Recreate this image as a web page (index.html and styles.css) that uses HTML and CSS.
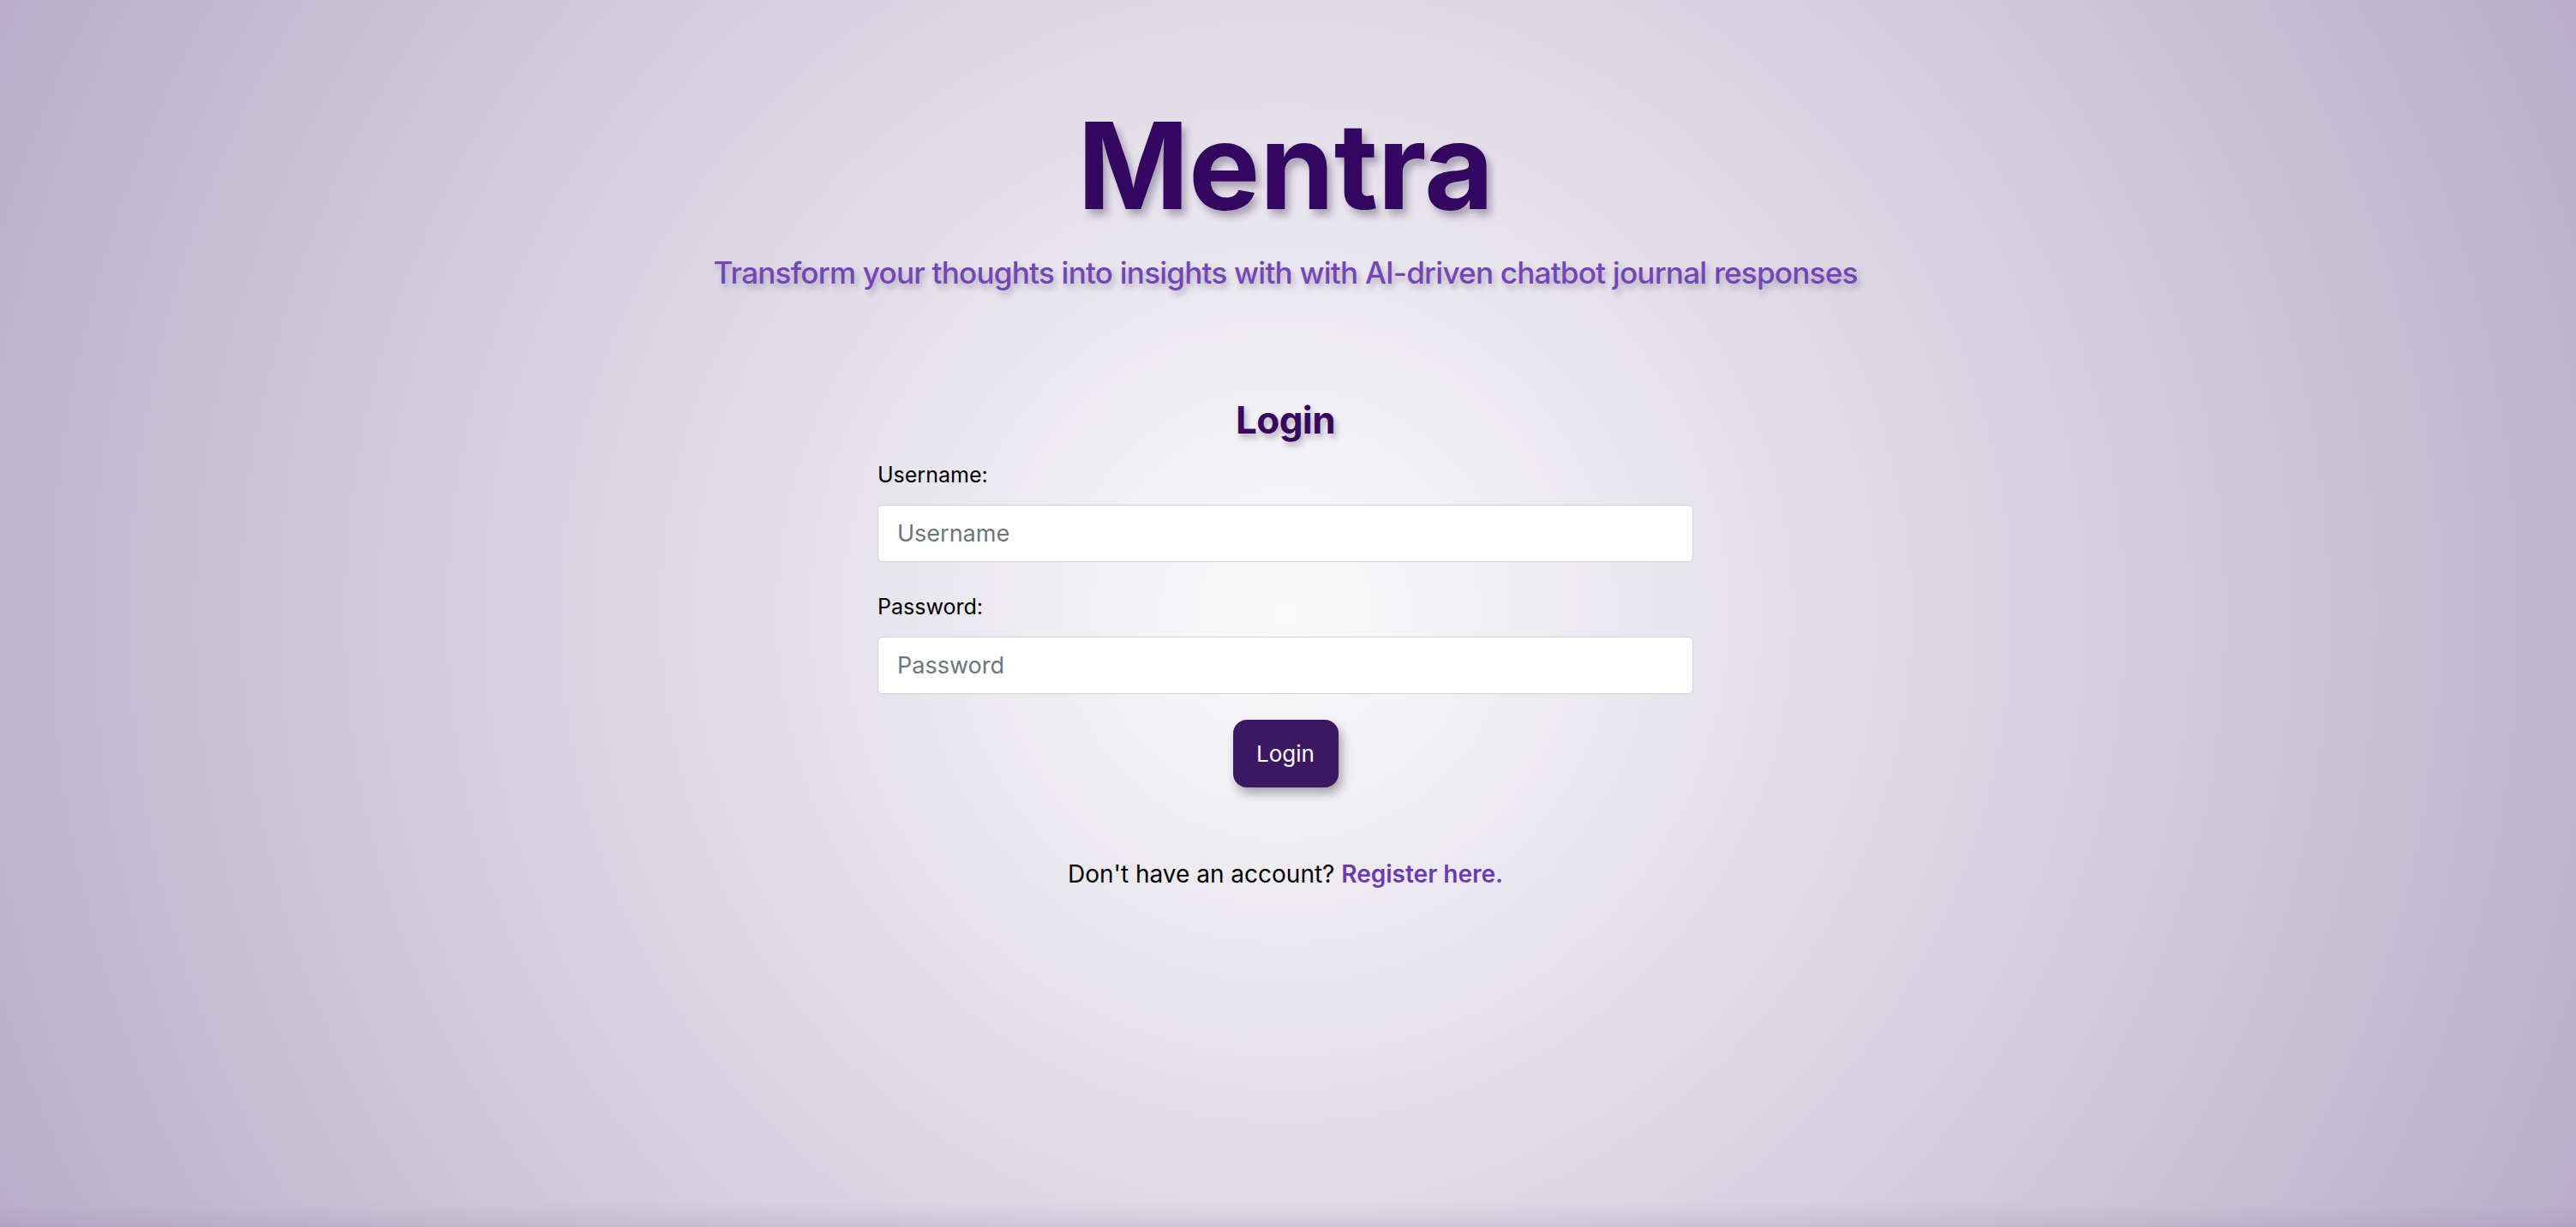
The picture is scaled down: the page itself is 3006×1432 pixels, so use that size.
FILE: index.html
```html
<!DOCTYPE html>
<html lang="en">
<head>
<meta charset="utf-8">
<title>Mentra - Login</title>
<link rel="stylesheet" href="styles.css">
</head>
<body>
<main class="page">
  <header class="hero">
    <h1 class="brand">Mentra</h1>
    <p class="tagline">Transform your thoughts into insights with with AI-driven chatbot journal responses</p>
  </header>
  <section class="login">
    <h2 class="login-title">Login</h2>
    <form class="login-form">
      <label class="field-label" for="username">Username:</label>
      <input class="field-input" id="username" type="text" placeholder="Username">
      <label class="field-label second" for="password">Password:</label>
      <input class="field-input" id="password" type="password" placeholder="Password">
      <button class="login-btn" type="button">Login</button>
    </form>
    <p class="register">Don't have an account? <a class="register-link" href="#">Register here.</a></p>
  </section>
</main>
</body>
</html>
```

FILE: styles.css
```css
html, body {
  margin: 0;
  padding: 0;
  height: 100%;
}
body {
  font-family: Inter, "Noto Sans", "Liberation Sans", sans-serif;
  background:
    linear-gradient(to top, rgba(140, 125, 160, 0.18) 0, rgba(140, 125, 160, 0) 28px),
    radial-gradient(circle farthest-corner at 1500px 716px, #fafafa 0%, #b8aecb 100%);
  min-height: 1432px;
  overflow: hidden;
}
.page {
  width: 3000px;
  display: flex;
  flex-direction: column;
  align-items: center;
  padding-top: 123px;
}
.hero {
  display: flex;
  flex-direction: column;
  align-items: center;
}
.brand {
  margin: 0;
  font-size: 140px;
  line-height: 140px;
  font-weight: 700;
  color: #33065f;
  letter-spacing: -0.5px;
  text-shadow: 5px 7px 9px rgba(60, 40, 80, 0.35);
}
.tagline {
  margin: 37px 0 0;
  font-size: 35px;
  line-height: 36px;
  font-weight: 500;
  letter-spacing: -0.75px;
  color: #7445b6;
  text-shadow: 3px 5px 7px rgba(60, 40, 80, 0.3);
}
.login {
  margin-top: 131px;
  width: 952px;
  display: flex;
  flex-direction: column;
  align-items: center;
}
.login-title {
  margin: 0;
  font-size: 44px;
  line-height: 46px;
  font-weight: 700;
  letter-spacing: -0.6px;
  color: #36095f;
  text-shadow: 3px 5px 6px rgba(60, 40, 80, 0.3);
}
.login-form {
  width: 100%;
  margin-top: 30px;
  display: flex;
  flex-direction: column;
}
.field-label {
  font-size: 25px;
  line-height: 23px;
  color: #000;
  margin-bottom: 23px;
}
.field-label.second {
  margin-top: 41px;
}
.field-input {
  box-sizing: border-box;
  width: 100%;
  height: 67px;
  margin: 0;
  padding: 0 22px;
  border: 1px solid #cfd3da;
  border-radius: 6px;
  background: #fff;
  font-family: Inter, "Noto Sans", "Liberation Sans", sans-serif;
  font-size: 27px;
  color: #212529;
  outline: none;
}
.field-input::placeholder {
  color: #6c757d;
}
.login-btn {
  align-self: center;
  margin-top: 30px;
  width: 123px;
  height: 79px;
  border: none;
  border-radius: 16px;
  background: #3c1862;
  color: #fff;
  font-family: Inter, "Noto Sans", "Liberation Sans", sans-serif;
  font-size: 26px;
  box-shadow: 4px 7px 12px rgba(30, 20, 40, 0.35);
  cursor: pointer;
}
.register {
  margin: 88px 0 0;
  font-size: 28px;
  line-height: 27px;
  color: #000;
}
.register-link {
  color: #6c3bb3;
  font-weight: 600;
  text-decoration: none;
}
```
